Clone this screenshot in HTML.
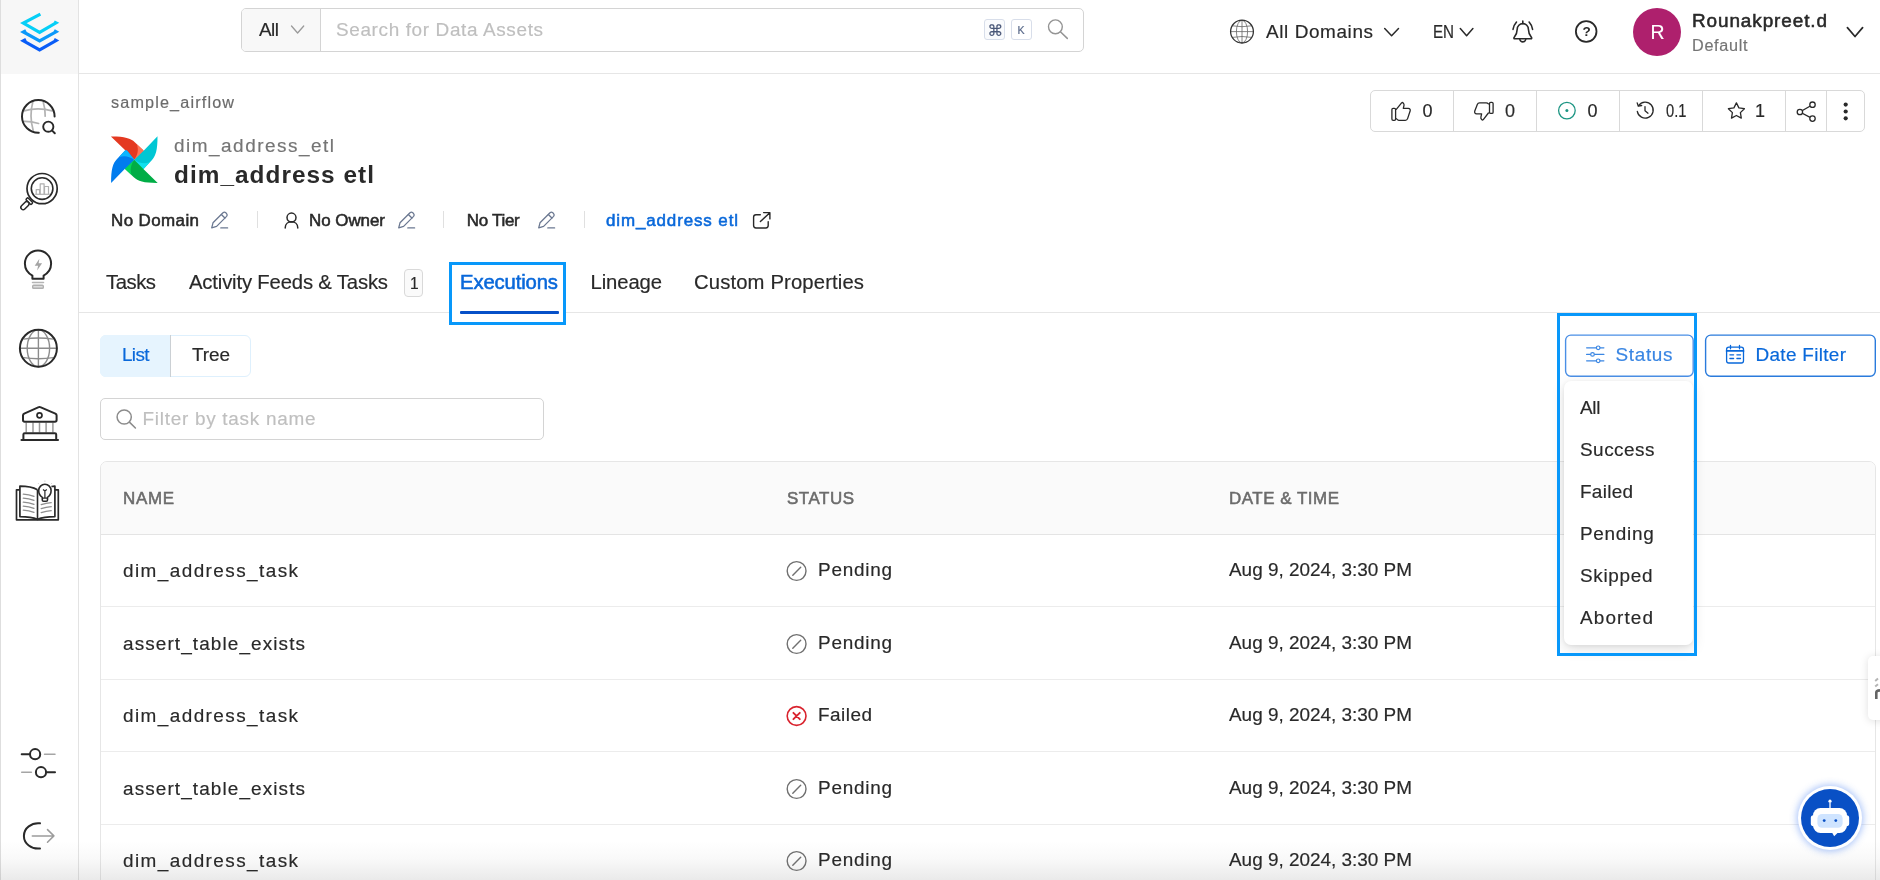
<!DOCTYPE html>
<html lang="en">
<head>
<meta charset="utf-8">
<title>dim_address etl - Executions</title>
<style>
*{box-sizing:border-box;margin:0;padding:0}
html,body{width:1880px;height:880px;overflow:hidden;background:#fff}
body{position:relative;font-family:"Liberation Sans",sans-serif;color:#292929}
.t{position:absolute;white-space:nowrap;line-height:1}
.b{position:absolute}
svg{position:absolute;overflow:visible}
.i{fill:none;stroke:#292929;stroke-width:1.5;stroke-linecap:round;stroke-linejoin:round}
</style>
</head>
<body>

<!-- sidebar -->
<div class="b" style="left:0;top:0;width:79px;height:880px;background:#fff;border-right:1px solid #e3e3e3;border-left:1px solid #dedede"></div>
<div class="b" style="left:1px;top:0;width:77px;height:74px;background:#f7f7f7"></div>
<!-- header line -->
<div class="b" style="left:79px;top:73px;width:1801px;height:1px;background:#e6e6e6"></div>
<!-- search -->
<div class="b" style="left:241px;top:8px;width:843px;height:44px;border:1px solid #d4d4d4;border-radius:5px;background:#fff"></div>
<div class="b" style="left:242px;top:9px;width:79px;height:42px;background:#f8f8f8;border-right:1px solid #d4d4d4;border-radius:4px 0 0 4px"></div>
<div class="b" style="left:984px;top:19px;width:21px;height:21px;border:1px solid #d8deea;border-radius:3px;background:#fafbfd"></div>
<div class="b" style="left:1011px;top:19px;width:21px;height:21px;border:1px solid #d8deea;border-radius:3px;background:#fff"></div>
<!-- avatar -->
<div class="b" style="left:1633px;top:8px;width:48px;height:48px;border-radius:50%;background:#ae206d"></div>
<!-- button group -->
<div class="b" style="left:1370px;top:90px;width:495px;height:42px;border:1px solid #d9d9d9;border-radius:5px;background:#fff"></div>
<div class="b" style="left:1453px;top:91px;width:1px;height:40px;background:#d9d9d9"></div>
<div class="b" style="left:1536px;top:91px;width:1px;height:40px;background:#d9d9d9"></div>
<div class="b" style="left:1619px;top:91px;width:1px;height:40px;background:#d9d9d9"></div>
<div class="b" style="left:1702px;top:91px;width:1px;height:40px;background:#d9d9d9"></div>
<div class="b" style="left:1785px;top:91px;width:1px;height:40px;background:#d9d9d9"></div>
<div class="b" style="left:1826px;top:91px;width:1px;height:40px;background:#d9d9d9"></div>
<!-- meta separators -->
<div class="b" style="left:257px;top:211px;width:1px;height:17px;background:#e0e0e0"></div>
<div class="b" style="left:443px;top:211px;width:1px;height:17px;background:#e0e0e0"></div>
<div class="b" style="left:584px;top:211px;width:1px;height:17px;background:#e0e0e0"></div>
<!-- tabs -->
<div class="b" style="left:79px;top:312px;width:1801px;height:1px;background:#e6e6e6"></div>
<div class="b" style="left:404px;top:269px;width:19px;height:28px;border:1px solid #d9d9d9;border-radius:4px;background:#fafafa"></div>
<div class="b" style="left:449px;top:262px;width:117px;height:63px;border:3px solid #0898fa;background:#fff"></div>
<div class="b" style="left:460px;top:311px;width:99px;height:3px;background:#0650c8;border-radius:1px"></div>
<!-- list/tree -->
<div class="b" style="left:100px;top:335px;width:151px;height:42px;border:1px solid #def0fd;border-radius:6px;background:#fff"></div>
<div class="b" style="left:100px;top:335px;width:71px;height:42px;background:#e6f4fe;border-radius:6px 0 0 6px;border-right:1px solid #cbd0d4"></div>
<!-- filter input -->
<div class="b" style="left:100px;top:398px;width:444px;height:42px;border:1px solid #d4d4d4;border-radius:5px;background:#fff"></div>
<!-- table -->
<div class="b" style="left:100px;top:461px;width:1776px;height:440px;border:1px solid #e6e6e6;border-radius:7px;background:#fff;overflow:hidden">
  <div style="height:72px;background:#fafafa"></div>
</div>
<div class="b" style="left:101px;top:533.5px;width:1774px;height:1.2px;background:#e4e4e4"></div>
<div class="b" style="left:101px;top:606px;width:1774px;height:1px;background:#ececec"></div>
<div class="b" style="left:101px;top:678.6px;width:1774px;height:1px;background:#ececec"></div>
<div class="b" style="left:101px;top:751px;width:1774px;height:1px;background:#ececec"></div>
<div class="b" style="left:101px;top:823.6px;width:1774px;height:1px;background:#ececec"></div>
<!-- status / date buttons -->
<svg style="left:1560px;top:330px" width="320" height="52" viewBox="1560 330 320 52">
<rect x="1565.6" y="335.1" width="127.6" height="41.1" rx="5.2" fill="#fff" stroke="#4a8fe6" stroke-width="1.4"/>
<rect x="1705.6" y="335.1" width="169.7" height="41.1" rx="5.2" fill="#fff" stroke="#2a7bdc" stroke-width="1.4"/>
</svg>

<!-- dropdown -->
<div class="b" style="left:1564px;top:381px;width:128.6px;height:264px;border-radius:7px;background:#fff;box-shadow:0 4px 14px rgba(0,0,0,0.13),0 1px 4px rgba(0,0,0,0.06)"></div>
<div class="b" style="left:1557px;top:313px;width:140px;height:343px;border:3px solid #0898fa"></div>
<!-- bottom gradient -->
<div class="b" style="left:0;top:841px;width:1880px;height:39px;background:linear-gradient(to bottom,rgba(120,120,120,0) 0%,rgba(120,120,120,0.045) 45%,rgba(120,120,120,0.155) 100%)"></div>
<!-- side tab -->
<div class="b" style="left:1868px;top:656px;width:20px;height:64px;border-radius:5px;background:#fff;box-shadow:0 1px 8px rgba(0,0,0,0.13)"></div>
<!-- chatbot -->
<div class="b" style="left:1798px;top:786px;width:64px;height:64px;border-radius:50%;background:#fff;box-shadow:0 0 7px 1.5px rgba(60,120,240,0.42)"></div>
<div class="b" style="left:1801px;top:789px;width:58px;height:58px;border-radius:50%;background:#0950c5"></div>
<svg style="left:0px;top:0px" width="80" height="75" viewBox="0 0 80 75">
<path d="M40.4 14.2 L23.4 23.1 L39.6 32.3 L56 22.9 L54 21.8" fill="none" stroke="#05cff7" stroke-width="3.2" stroke-linejoin="miter"/>
<path d="M26 30.6 L23.4 32 L39.6 41 L56 31.8 L54 30.7" fill="none" stroke="#0b98fa" stroke-width="3.2" stroke-linejoin="miter"/>
<path d="M26 39.4 L23.4 40.8 L39.6 49.8 L56 40.6 L54 39.5" fill="none" stroke="#0a5df7" stroke-width="3.2" stroke-linejoin="miter"/>
</svg>
<svg style="left:0px;top:90px" width="80" height="60" viewBox="0 90 80 60">
<g fill="none" stroke="#b2b2b2" stroke-width="1.7" stroke-linecap="round">
<path d="M32.8 102 Q29 116 33.2 130.5"/>
<path d="M43.3 102.6 Q45.4 109 45.2 116.2"/>
<path d="M24 110.9 Q38 106.8 52.2 110.9"/>
<path d="M24 121.4 Q31 121.2 38.6 123.5"/>
</g>
<path d="M38.8 132.7 A16.3 16.3 0 1 1 54.6 116.6" fill="none" stroke="#292929" stroke-width="2" stroke-linecap="round"/>
<circle cx="48.3" cy="126.7" r="5.1" fill="#fff" stroke="#292929" stroke-width="1.9"/>
<path d="M52.2 130.6 L54.8 133.2" stroke="#292929" stroke-width="2" stroke-linecap="round"/>
</svg>
<svg style="left:0px;top:165px" width="80" height="55" viewBox="0 165 80 55">
<circle cx="42.1" cy="188.6" r="15.1" fill="none" stroke="#292929" stroke-width="1.7"/>
<circle cx="42.1" cy="188.6" r="10.8" fill="none" stroke="#292929" stroke-width="1.6"/>
<g fill="none" stroke="#b0b0b0" stroke-width="1.2" stroke-linejoin="round">
<path d="M35.3 194.3 H49.8"/>
<path d="M36.2 194.3 V189.6 H39.6 V194.3"/>
<path d="M40.2 194.3 V183.8 H44.1 V194.3"/>
<path d="M44.5 194.3 V186.5 H48.5 V194.3"/>
</g>
<g transform="translate(29.4 201.1) rotate(45)" fill="#fff" stroke="#292929" stroke-width="1.5" stroke-linejoin="round">
<rect x="-3.7" y="-1.3" width="7.4" height="2.8" rx="1"/>
<rect x="-2.3" y="1.5" width="4.6" height="9.6" rx="2.3"/>
</g>
</svg>
<svg style="left:0px;top:240px" width="80" height="55" viewBox="0 240 80 55">
<path d="M32.4 278.7 V275.6 C27.8 273.2 24.9 268.8 24.9 263.6 A13.1 13.1 0 0 1 51.1 263.6 C51.1 268.8 48.2 273.2 43.6 275.6 V278.7 Z" fill="none" stroke="#292929" stroke-width="2" stroke-linejoin="round"/>
<path d="M32.5 282.5 H43.5" stroke="#b5b5b5" stroke-width="1.5" stroke-linecap="round"/>
<rect x="32.7" y="285.3" width="10.6" height="3" rx="0.9" fill="#dcdcdc" stroke="#b0b0b0" stroke-width="1.4"/>
<path d="M39.4 258.8 L34.7 265.7 H38.1 L37.1 270.4 L42.1 263.2 H38.6 Z" fill="#a4a4a4"/>
</svg>
<svg style="left:0px;top:325px" width="80" height="50" viewBox="0 325 80 50">
<g fill="none" stroke="#8c8c8c" stroke-width="1.4">
<path d="M38.4 330 V366.6"/>
<path d="M20 348.3 H56.8"/>
<ellipse cx="38.4" cy="348.3" rx="11.2" ry="18.4"/>
<path d="M23.4 339.1 Q38.4 336.9 53.4 339.1"/>
<path d="M23.4 357.6 Q38.4 359.8 53.4 357.6"/>
</g>
<circle cx="38.4" cy="348.3" r="18.5" fill="none" stroke="#292929" stroke-width="2"/>
</svg>
<svg style="left:0px;top:400px" width="80" height="45" viewBox="0 400 80 45">
<g stroke="#9c9c9c" stroke-width="1.5">
<path d="M26.2 422.5 V432.6 M33 422.5 V432.6 M39.5 422.5 V432.6 M46.1 422.5 V432.6 M52.9 422.5 V432.6"/>
</g>
<path d="M38.7 407.2 Q39.5 406.8 40.3 407.2 L55.4 413.6 Q56.6 414.2 56.6 415.4 V420 Q56.6 421.7 54.9 421.7 H24.7 Q23 421.7 23 420 V415.4 Q23 414.2 24.2 413.6 Z" fill="none" stroke="#292929" stroke-width="2" stroke-linejoin="round"/>
<circle cx="39.5" cy="415.3" r="2.5" fill="none" stroke="#292929" stroke-width="1.7"/>
<path d="M23.4 439.4 V434.6 Q23.4 433.3 24.7 433.3 H54.9 Q56.2 433.3 56.2 434.6 V439.4" fill="none" stroke="#292929" stroke-width="2" stroke-linejoin="round"/>
<path d="M21.5 440 H58" stroke="#292929" stroke-width="2.1" stroke-linecap="round"/>
</svg>
<svg style="left:0px;top:475px" width="80" height="50" viewBox="0 475 80 50">
<path d="M19.9 489.8 H16.5 V519.8 H58.3 V489.8 H54.9" fill="none" stroke="#292929" stroke-width="1.7" stroke-linejoin="round"/>
<path d="M37.5 489.8 C33 487.3 26.5 486.2 19.9 486.2 V516.6 C26.5 516.6 33 517.4 37.5 519.4 C42 517.4 48.5 516.6 54.9 516.6 V486.2 C53.4 486.2 52.4 486.3 51.4 486.5" fill="none" stroke="#292929" stroke-width="1.7" stroke-linejoin="round"/>
<path d="M37.5 489.8 V519.4" stroke="#292929" stroke-width="1.6"/>
<g stroke="#8f8f8f" stroke-width="1.3" fill="none" stroke-linecap="round">
<path d="M23.3 494.2 Q29 494.6 34 496.4 M23.3 498.2 Q29 498.6 34 500.4 M23.3 502.2 Q29 502.6 34 504.4 M23.3 506.2 Q29 506.6 34 508.4 M23.3 510.2 Q29 510.6 34 512.4"/>
<path d="M41.2 504.6 Q46 502.9 51.2 502.6 M41.2 508.6 Q46 506.9 51.2 506.6 M41.2 512.6 Q46 510.9 51.2 510.6"/>
</g>
<path d="M42.3 500 V497.3 C40 495.8 38.7 493.3 38.7 490.5 A6.2 6.2 0 0 1 51.1 490.5 C51.1 493.3 49.8 495.8 47.5 497.3 V500 Q47.5 501.3 46.2 501.3 H43.6 Q42.3 501.3 42.3 500 Z" fill="#fff" stroke="#292929" stroke-width="1.6" stroke-linejoin="round"/>
<path d="M43 489.6 L44.9 490.9 L46.8 489.6 M44.9 490.9 V497.4 M42.5 498.2 H47.3" stroke="#292929" stroke-width="1.2" fill="none"/>
<g stroke="#b8b8b8" stroke-width="0.9"><path d="M44.9 480.6 V481.6 M38.3 483.4 L39 484.1 M51.6 483.4 L50.9 484.1"/></g>
</svg>
<svg style="left:0px;top:740px" width="80" height="45" viewBox="0 740 80 45">
<path d="M21.7 754.2 H29.6" stroke="#292929" stroke-width="2" stroke-linecap="round"/>
<circle cx="35.1" cy="754.2" r="5.1" fill="none" stroke="#292929" stroke-width="2"/>
<path d="M44.5 754.2 H55" stroke="#a5a5a5" stroke-width="1.5" stroke-linecap="round"/>
<path d="M21.7 772.2 H31.4" stroke="#a5a5a5" stroke-width="1.5" stroke-linecap="round"/>
<circle cx="41" cy="772.2" r="5.1" fill="none" stroke="#292929" stroke-width="2"/>
<path d="M46.8 772.2 H55" stroke="#292929" stroke-width="2" stroke-linecap="round"/>
</svg>
<svg style="left:0px;top:815px" width="80" height="45" viewBox="0 815 80 45">
<path d="M40 823.3 A14.3 12.7 0 1 0 40 848.5" fill="none" stroke="#292929" stroke-width="2" stroke-linecap="round"/>
<path d="M32.3 835.9 H53.6 M47.5 829.6 L53.9 835.9 L47.5 842.3" fill="none" stroke="#9c9c9c" stroke-width="1.5" stroke-linecap="round" stroke-linejoin="round"/>
</svg>
<svg style="left:285px;top:20px" width="25" height="20" viewBox="285 20 25 20"><path d="M291.5 26 L297.6 33 L303.7 26" fill="none" stroke="#9a9a9a" stroke-width="1.3" stroke-linecap="round" stroke-linejoin="round"/></svg>
<svg style="left:1040px;top:15px" width="35" height="30" viewBox="1040 15 35 30"><circle cx="1055.4" cy="26.8" r="6.9" fill="none" stroke="#949494" stroke-width="1.4"/><path d="M1060.4 31.8 L1067.3 38.4" stroke="#949494" stroke-width="1.5" stroke-linecap="round"/></svg>
<svg style="left:1225px;top:15px" width="35" height="35" viewBox="1225 15 35 35">
<g fill="none" stroke="#666" stroke-width="0.8">
<path d="M1242 20.2 V43 M1230.5 31.6 H1253.5"/>
<ellipse cx="1242" cy="31.6" rx="5.6" ry="11.3"/>
<path d="M1232.3 25.8 Q1242 27.6 1251.7 25.8 M1232.3 37.4 Q1242 35.6 1251.7 37.4"/>
</g>
<circle cx="1242" cy="31.6" r="11.4" fill="none" stroke="#333" stroke-width="1.3"/>
</svg>
<svg style="left:1380px;top:22px" width="25" height="20" viewBox="1380 22 25 20"><path d="M1384.7 28.6 L1391.6 35.8 L1398.5 28.6" fill="none" stroke="#292929" stroke-width="1.5" stroke-linecap="round" stroke-linejoin="round"/></svg>
<svg style="left:1456px;top:22px" width="25" height="20" viewBox="1456 22 25 20"><path d="M1460.3 28.6 L1466.6 35.8 L1472.9 28.6" fill="none" stroke="#292929" stroke-width="1.5" stroke-linecap="round" stroke-linejoin="round"/></svg>
<svg style="left:1842px;top:20px" width="30" height="25" viewBox="1842 20 30 25"><path d="M1847.4 27.6 L1855 36.5 L1862.6 27.6" fill="none" stroke="#292929" stroke-width="1.7" stroke-linecap="round" stroke-linejoin="round"/></svg>
<svg style="left:1505px;top:15px" width="35" height="35" viewBox="1505 15 35 35">
<g fill="none" stroke="#292929" stroke-width="1.6" stroke-linecap="round" stroke-linejoin="round">
<path d="M1522.8 21 V23.6"/>
<path d="M1514.6 38.8 C1514 38.8 1513.7 38.1 1514.1 37.6 C1516.3 34.8 1517.2 32.6 1517.2 29.2 C1517.2 26 1519.7 23.6 1522.8 23.6 C1525.9 23.6 1528.4 26 1528.4 29.2 C1528.4 32.6 1529.3 34.8 1531.5 37.6 C1531.9 38.1 1531.6 38.8 1531 38.8 Z"/>
<path d="M1519.9 39.6 A3 3 0 0 0 1525.7 39.6"/>
<path d="M1516.5 22 Q1513.6 25.2 1513 29.4"/>
<path d="M1529.1 22 Q1532 25.2 1532.6 29.4"/>
</g>
</svg>
<svg style="left:1570px;top:15px" width="35" height="35" viewBox="1570 15 35 35"><circle cx="1586.2" cy="31.5" r="10.3" fill="none" stroke="#292929" stroke-width="1.8"/></svg>
<svg style="left:110px;top:135px" width="50" height="50" viewBox="110 135 50 50"><g transform="translate(134.3 159.7)"><g transform="rotate(0)"><path d="M-23.4 -23.2 C-10 -23.3 -3.5 -21.5 0.5 -17.5 L9 -9.5 Q10 -8.2 9 -7 L0 0 L-9.3 -9.6 Z" fill="#e43921"/><path d="M2.6 -15.2 L9 -9.5 Q10 -8.2 9 -7 L0 0 C3.5 -5 4.5 -10 2.6 -15.2 Z" fill="#ff7557"/></g><g transform="rotate(90)"><path d="M-23.4 -23.2 C-10 -23.3 -3.5 -21.5 0.5 -17.5 L9 -9.5 Q10 -8.2 9 -7 L0 0 L-9.3 -9.6 Z" fill="#00c7d4"/><path d="M2.6 -15.2 L9 -9.5 Q10 -8.2 9 -7 L0 0 C3.5 -5 4.5 -10 2.6 -15.2 Z" fill="#11e1ee"/></g><g transform="rotate(180)"><path d="M-23.4 -23.2 C-10 -23.3 -3.5 -21.5 0.5 -17.5 L9 -9.5 Q10 -8.2 9 -7 L0 0 L-9.3 -9.6 Z" fill="#00ad46"/><path d="M2.6 -15.2 L9 -9.5 Q10 -8.2 9 -7 L0 0 C3.5 -5 4.5 -10 2.6 -15.2 Z" fill="#04d659"/></g><g transform="rotate(270)"><path d="M-23.4 -23.2 C-10 -23.3 -3.5 -21.5 0.5 -17.5 L9 -9.5 Q10 -8.2 9 -7 L0 0 L-9.3 -9.6 Z" fill="#017cee"/><path d="M2.6 -15.2 L9 -9.5 Q10 -8.2 9 -7 L0 0 C3.5 -5 4.5 -10 2.6 -15.2 Z" fill="#0cb6ff"/></g></g></svg>
<svg style="left:210.1px;top:210px" width="20" height="20" viewBox="210.1 210 20 20"><g transform="translate(211.1 211.6)" fill="none" stroke="#6b7891" stroke-width="1.3" stroke-linecap="round" stroke-linejoin="round">
<path d="M0.7 16.2 L2 11.2 L12 1.2 Q13.4 0 14.8 1.2 L15.6 2 Q16.8 3.4 15.6 4.8 L5.6 14.8 Z"/>
<path d="M10.4 2.9 L13.9 6.4"/>
<path d="M9.8 16.3 H16.6"/>
</g></svg>
<svg style="left:396.5px;top:210px" width="20" height="20" viewBox="396.5 210 20 20"><g transform="translate(397.5 211.6)" fill="none" stroke="#6b7891" stroke-width="1.3" stroke-linecap="round" stroke-linejoin="round">
<path d="M0.7 16.2 L2 11.2 L12 1.2 Q13.4 0 14.8 1.2 L15.6 2 Q16.8 3.4 15.6 4.8 L5.6 14.8 Z"/>
<path d="M10.4 2.9 L13.9 6.4"/>
<path d="M9.8 16.3 H16.6"/>
</g></svg>
<svg style="left:536.6px;top:210px" width="20" height="20" viewBox="536.6 210 20 20"><g transform="translate(537.6 211.6)" fill="none" stroke="#6b7891" stroke-width="1.3" stroke-linecap="round" stroke-linejoin="round">
<path d="M0.7 16.2 L2 11.2 L12 1.2 Q13.4 0 14.8 1.2 L15.6 2 Q16.8 3.4 15.6 4.8 L5.6 14.8 Z"/>
<path d="M10.4 2.9 L13.9 6.4"/>
<path d="M9.8 16.3 H16.6"/>
</g></svg>
<svg style="left:280px;top:210px" width="22" height="20" viewBox="280 210 22 20"><g fill="none" stroke="#292929" stroke-width="1.5" stroke-linecap="round">
<circle cx="291.5" cy="217.6" r="4.5"/>
<path d="M285.2 228 C285.2 219.8 297.8 219.8 297.8 228"/>
</g></svg>
<svg style="left:750px;top:208px" width="24" height="24" viewBox="750 208 24 24"><g fill="none" stroke="#292929" stroke-width="1.4" stroke-linecap="round" stroke-linejoin="round">
<path d="M760.3 214.7 H756 Q753.6 214.7 753.6 217.1 V225.6 Q753.6 228 756 228 H765.8 Q768.2 228 768.2 225.6 V221.6"/>
<path d="M760.4 221.6 L769.6 212.9 M763.6 212.6 H769.9 V218.9"/>
</g></svg>
<svg style="left:1385px;top:98px" width="30" height="28" viewBox="1385 98 30 28"><g fill="none" stroke="#292929" stroke-width="1.3" stroke-linecap="round" stroke-linejoin="round">
<rect x="1391.9" y="108.3" width="3.7" height="12" rx="1.2"/>
<path d="M1396.5 109.2 L1401.6 102.9 Q1402.4 102.2 1403.2 102.9 Q1404.3 103.9 1404 105.3 L1403.3 108.3 H1408.3 Q1410.6 108.5 1410.2 110.8 L1407.6 118.6 Q1407 120.3 1405.3 120.3 H1398.8 Q1397.3 120.2 1396.5 118.8"/>
</g></svg>
<svg style="left:1468px;top:98px" width="30" height="28" viewBox="1468 98 30 28"><g fill="none" stroke="#292929" stroke-width="1.3" stroke-linecap="round" stroke-linejoin="round">
<rect x="1489.5" y="102.4" width="3.6" height="11" rx="1.2"/>
<path d="M1488.4 113 L1483.3 119.6 Q1482.5 120.4 1481.7 119.6 Q1480.6 118.6 1480.9 117.2 L1481.6 113.8 H1476.6 Q1474.3 113.6 1474.7 111.3 L1477.3 104.4 Q1477.9 102.8 1479.6 102.8 H1486.1 Q1487.6 102.8 1488.4 103.9"/>
</g></svg>
<svg style="left:1555px;top:98px" width="25" height="25" viewBox="1555 98 25 25"><circle cx="1566.9" cy="110.6" r="8.3" fill="none" stroke="#1c9583" stroke-width="1.3"/><circle cx="1566.9" cy="110.6" r="1.5" fill="#1c9583"/></svg>
<svg style="left:1633px;top:98px" width="25" height="25" viewBox="1633 98 25 25"><g fill="none" stroke="#292929" stroke-width="1.3" stroke-linecap="round" stroke-linejoin="round">
<path d="M1638.6 105.6 A8 8 0 1 1 1637.3 111.4"/>
<path d="M1637.2 102.9 L1638.3 106.2 L1641.7 105.5"/>
<path d="M1645 106.6 V110.7 L1648 113.2"/>
</g></svg>
<svg style="left:1724px;top:98px" width="25" height="25" viewBox="1724 98 25 25"><path d="M1736.4 102.9 L1738.9 107.9 L1744.4 108.7 L1740.4 112.6 L1741.3 118.1 L1736.4 115.5 L1731.5 118.1 L1732.4 112.6 L1728.4 108.7 L1733.9 107.9 Z" fill="none" stroke="#292929" stroke-width="1.3" stroke-linejoin="round"/></svg>
<svg style="left:1793px;top:98px" width="26" height="28" viewBox="1793 98 26 28"><g fill="#fff" stroke="#292929" stroke-width="1.3">
<path d="M1812.5 104.7 L1799.9 112 L1812.5 118.6" fill="none"/>
<circle cx="1812.5" cy="104.7" r="2.7"/><circle cx="1799.9" cy="112" r="2.7"/><circle cx="1812.5" cy="118.6" r="2.7"/>
</g></svg>
<svg style="left:1840px;top:98px" width="12" height="28" viewBox="1840 98 12 28"><circle cx="1845.7" cy="104.6" r="2.1" fill="#292929"/><circle cx="1845.7" cy="111.5" r="2.1" fill="#292929"/><circle cx="1845.7" cy="118.3" r="2.1" fill="#292929"/></svg>
<svg style="left:112px;top:405px" width="30" height="28" viewBox="112 405 30 28"><circle cx="124.2" cy="417" r="7.1" fill="none" stroke="#8c8c8c" stroke-width="1.5"/><path d="M129.4 422.2 L135.4 428" stroke="#8c8c8c" stroke-width="1.6" stroke-linecap="round"/></svg>
<svg style="left:1583px;top:342px" width="25" height="25" viewBox="1583 342 25 25"><g fill="#fff" stroke="#3a86e3" stroke-width="1.2" stroke-linecap="round">
<path d="M1586.6 347.8 H1603.9 M1586.6 354.4 H1603.9 M1586.6 360.8 H1603.9"/>
<circle cx="1598.2" cy="347.8" r="1.8"/><circle cx="1592.5" cy="354.4" r="1.8"/><circle cx="1598.2" cy="360.8" r="1.8"/>
</g></svg>
<svg style="left:1722px;top:342px" width="26" height="26" viewBox="1722 342 26 26"><g fill="none" stroke="#0968da" stroke-width="1.3" stroke-linecap="round" stroke-linejoin="round">
<rect x="1726.6" y="347.1" width="16.9" height="15.9" rx="2.2"/>
<path d="M1726.6 350.9 H1743.5" stroke-width="1.7"/><path d="M1730.5 345.4 V348.8 M1739.5 345.4 V348.8"/>
<path d="M1729.9 354.8 H1733.6 M1736.9 354.8 H1740.5 M1729.9 358.5 H1733.6 M1736.9 358.5 H1740.5"/>
</g></svg>
<svg style="left:784px;top:558px" width="26" height="26" viewBox="784 558 26 26"><circle cx="796.6" cy="571" r="9.4" fill="none" stroke="#707070" stroke-width="1.4"/><path d="M792.8 575.3 L800.7 567.2" stroke="#707070" stroke-width="1.4" stroke-linecap="round"/></svg>
<svg style="left:784px;top:630.5px" width="26" height="26" viewBox="784 630.5 26 26"><circle cx="796.6" cy="643.5" r="9.4" fill="none" stroke="#707070" stroke-width="1.4"/><path d="M792.8 647.8 L800.7 639.7" stroke="#707070" stroke-width="1.4" stroke-linecap="round"/></svg>
<svg style="left:784px;top:703px" width="26" height="26" viewBox="784 703 26 26"><circle cx="796.6" cy="716" r="9.4" fill="none" stroke="#d9232e" stroke-width="1.6"/><path d="M793.4 712.8 L799.8 719.2 M799.8 712.8 L793.4 719.2" stroke="#d9232e" stroke-width="1.9" stroke-linecap="round"/></svg>
<svg style="left:784px;top:775.5px" width="26" height="26" viewBox="784 775.5 26 26"><circle cx="796.6" cy="788.5" r="9.4" fill="none" stroke="#707070" stroke-width="1.4"/><path d="M792.8 792.8 L800.7 784.7" stroke="#707070" stroke-width="1.4" stroke-linecap="round"/></svg>
<svg style="left:784px;top:848px" width="26" height="26" viewBox="784 848 26 26"><circle cx="796.6" cy="861" r="9.4" fill="none" stroke="#707070" stroke-width="1.4"/><path d="M792.8 865.3 L800.7 857.2" stroke="#707070" stroke-width="1.4" stroke-linecap="round"/></svg>
<svg style="left:1800px;top:790px" width="60" height="60" viewBox="1800 790 60 60">
<path d="M1830 808 V802.5" stroke="#fff" stroke-width="1.3"/>
<circle cx="1830" cy="801.2" r="1.6" fill="#fff"/>
<rect x="1810.8" y="815.2" width="38.4" height="11" rx="2.6" fill="#fff"/>
<rect x="1813" y="808" width="34" height="25" rx="7.5" fill="#fff"/>
<path d="M1832 832.5 H1838 L1834.2 836.3 Z" fill="#fff"/>
<rect x="1817.4" y="814" width="25.2" height="13.8" rx="4.6" fill="#cfe4ff"/>
<circle cx="1824.2" cy="820.6" r="1.4" fill="#0950c5"/>
<circle cx="1835.8" cy="820.6" r="1.4" fill="#0950c5"/>
</svg>
<svg style="left:1870px;top:675px" width="10" height="30" viewBox="1870 675 10 30"><path d="M1875.2 681 L1878 678.6 M1875.2 686.6 L1878 684.2" stroke="#b4b4b4" stroke-width="2"/><path d="M1876.3 699 V692.5 Q1876.3 690.6 1880 690.4" fill="none" stroke="#646464" stroke-width="2.6"/></svg>
<div class="b" style="left:0;top:0;width:1880px;height:880px;will-change:transform">
<span class="t" id="t0" style="left:259.00px;top:21.01px;font-size:18.93px;font-weight:normal;color:#292929;letter-spacing:-0.516px;-webkit-text-stroke:0.18px #292929;">All</span>
<span class="t" id="t1" style="left:336.00px;top:21.01px;font-size:18.93px;font-weight:normal;color:#bfbfbf;letter-spacing:0.642px;-webkit-text-stroke:0.18px #bfbfbf;">Search for Data Assets</span>
<span class="t" id="t2" style="left:1266.00px;top:22.51px;font-size:18.93px;font-weight:normal;color:#292929;letter-spacing:0.605px;-webkit-text-stroke:0.18px #292929;">All Domains</span>
<span class="t" id="t3" style="left:1432.50px;top:23.51px;font-size:17.65px;font-weight:normal;color:#292929;letter-spacing:0.000px;-webkit-text-stroke:0.18px #292929;transform:scaleX(0.86);transform-origin:0 0;">EN</span>
<span class="t" id="t4" style="left:1650.50px;top:23.00px;font-size:19.40px;font-weight:normal;color:#fff;letter-spacing:0.000px;-webkit-text-stroke:0.18px #fff;">R</span>
<span class="t" id="t5" style="left:1692.00px;top:12.01px;font-size:18.93px;font-weight:normal;color:#292929;letter-spacing:0.905px;-webkit-text-stroke:0.55px #292929;">Rounakpreet.d</span>
<span class="t" id="t6" style="left:1692.00px;top:37.00px;font-size:16.22px;font-weight:normal;color:#757575;letter-spacing:0.693px;-webkit-text-stroke:0.18px #757575;">Default</span>
<span class="t" id="t7" style="left:111.00px;top:94.00px;font-size:16.22px;font-weight:normal;color:#6b6b6b;letter-spacing:1.148px;-webkit-text-stroke:0.18px #6b6b6b;">sample_airflow</span>
<span class="t" id="t8" style="left:174.00px;top:137.01px;font-size:18.93px;font-weight:normal;color:#757575;letter-spacing:1.511px;-webkit-text-stroke:0.18px #757575;">dim_address_etl</span>
<span class="t" id="t9" style="left:174.00px;top:162.51px;font-size:24.34px;font-weight:bold;color:#292929;letter-spacing:1.054px;">dim_address etl</span>
<span class="t" id="t10" style="left:111.00px;top:213.01px;font-size:16.95px;font-weight:normal;color:#292929;letter-spacing:0.408px;-webkit-text-stroke:0.55px #292929;">No Domain</span>
<span class="t" id="t11" style="left:309.00px;top:213.01px;font-size:16.95px;font-weight:normal;color:#292929;letter-spacing:-0.036px;-webkit-text-stroke:0.55px #292929;">No Owner</span>
<span class="t" id="t12" style="left:466.75px;top:213.01px;font-size:16.95px;font-weight:normal;color:#292929;letter-spacing:-0.266px;-webkit-text-stroke:0.55px #292929;">No Tier</span>
<span class="t" id="t13" style="left:606.00px;top:213.01px;font-size:16.95px;font-weight:normal;color:#0968da;letter-spacing:0.887px;-webkit-text-stroke:0.55px #0968da;">dim_address etl</span>
<span class="t" id="t14" style="left:106.00px;top:272.00px;font-size:20.28px;font-weight:normal;color:#292929;letter-spacing:-0.453px;-webkit-text-stroke:0.18px #292929;">Tasks</span>
<span class="t" id="t15" style="left:189.00px;top:272.00px;font-size:20.28px;font-weight:normal;color:#292929;letter-spacing:-0.160px;-webkit-text-stroke:0.18px #292929;">Activity Feeds &amp; Tasks</span>
<span class="t" id="t16" style="left:410.00px;top:275.51px;font-size:15.60px;font-weight:normal;color:#292929;letter-spacing:0.000px;-webkit-text-stroke:0.18px #292929;">1</span>
<span class="t" id="t17" style="left:460.00px;top:272.00px;font-size:20.28px;font-weight:normal;color:#0968da;letter-spacing:-0.127px;-webkit-text-stroke:0.55px #0968da;">Executions</span>
<span class="t" id="t18" style="left:590.50px;top:272.00px;font-size:20.28px;font-weight:normal;color:#292929;letter-spacing:-0.107px;-webkit-text-stroke:0.18px #292929;">Lineage</span>
<span class="t" id="t19" style="left:694.00px;top:272.00px;font-size:20.28px;font-weight:normal;color:#292929;letter-spacing:0.136px;-webkit-text-stroke:0.18px #292929;">Custom Properties</span>
<span class="t" id="t20" style="left:122.00px;top:346.01px;font-size:18.93px;font-weight:normal;color:#0968da;letter-spacing:-0.651px;-webkit-text-stroke:0.18px #0968da;">List</span>
<span class="t" id="t21" style="left:192.00px;top:346.01px;font-size:18.93px;font-weight:normal;color:#292929;letter-spacing:-0.073px;-webkit-text-stroke:0.18px #292929;">Tree</span>
<span class="t" id="t22" style="left:1615.50px;top:346.01px;font-size:18.93px;font-weight:normal;color:#3a86e3;letter-spacing:0.669px;-webkit-text-stroke:0.18px #3a86e3;">Status</span>
<span class="t" id="t23" style="left:1755.50px;top:346.01px;font-size:18.93px;font-weight:normal;color:#0968da;letter-spacing:0.322px;-webkit-text-stroke:0.18px #0968da;">Date Filter</span>
<span class="t" id="t24" style="left:142.50px;top:410.01px;font-size:18.93px;font-weight:normal;color:#bfbfbf;letter-spacing:0.731px;-webkit-text-stroke:0.18px #bfbfbf;">Filter by task name</span>
<span class="t" id="t25" style="left:123.00px;top:491.01px;font-size:16.97px;font-weight:normal;color:#6b6b6b;letter-spacing:0.688px;-webkit-text-stroke:0.55px #6b6b6b;">NAME</span>
<span class="t" id="t26" style="left:787.00px;top:491.01px;font-size:16.97px;font-weight:normal;color:#6b6b6b;letter-spacing:0.537px;-webkit-text-stroke:0.55px #6b6b6b;">STATUS</span>
<span class="t" id="t27" style="left:1229.00px;top:491.01px;font-size:16.97px;font-weight:normal;color:#6b6b6b;letter-spacing:0.522px;-webkit-text-stroke:0.55px #6b6b6b;">DATE &amp; TIME</span>
<span class="t" id="t28" style="left:1580.00px;top:399.01px;font-size:18.93px;font-weight:normal;color:#292929;letter-spacing:-0.266px;-webkit-text-stroke:0.18px #292929;">All</span>
<span class="t" id="t29" style="left:1580.00px;top:441.01px;font-size:18.93px;font-weight:normal;color:#292929;letter-spacing:0.497px;-webkit-text-stroke:0.18px #292929;">Success</span>
<span class="t" id="t30" style="left:1580.00px;top:483.01px;font-size:18.93px;font-weight:normal;color:#292929;letter-spacing:0.291px;-webkit-text-stroke:0.18px #292929;">Failed</span>
<span class="t" id="t31" style="left:1580.00px;top:525.01px;font-size:18.93px;font-weight:normal;color:#292929;letter-spacing:0.716px;-webkit-text-stroke:0.18px #292929;">Pending</span>
<span class="t" id="t32" style="left:1580.00px;top:567.01px;font-size:18.93px;font-weight:normal;color:#292929;letter-spacing:0.685px;-webkit-text-stroke:0.18px #292929;">Skipped</span>
<span class="t" id="t33" style="left:1580.00px;top:609.01px;font-size:18.93px;font-weight:normal;color:#292929;letter-spacing:1.120px;-webkit-text-stroke:0.18px #292929;">Aborted</span>
<span class="t" id="t34" style="left:1422.50px;top:101.76px;font-size:18.00px;font-weight:normal;color:#292929;letter-spacing:0.000px;-webkit-text-stroke:0.18px #292929;">0</span>
<span class="t" id="t35" style="left:1505.00px;top:101.76px;font-size:18.00px;font-weight:normal;color:#292929;letter-spacing:0.000px;-webkit-text-stroke:0.18px #292929;">0</span>
<span class="t" id="t36" style="left:1587.50px;top:101.76px;font-size:18.00px;font-weight:normal;color:#292929;letter-spacing:0.000px;-webkit-text-stroke:0.18px #292929;">0</span>
<span class="t" id="t37" style="left:1666.00px;top:102.75px;font-size:17.50px;font-weight:normal;color:#292929;letter-spacing:0.000px;-webkit-text-stroke:0.18px #292929;transform:scaleX(0.84);transform-origin:0 0;">0.1</span>
<span class="t" id="t38" style="left:1755.00px;top:101.76px;font-size:18.00px;font-weight:normal;color:#292929;letter-spacing:0.000px;-webkit-text-stroke:0.18px #292929;">1</span>
<span class="t" id="t39" style="left:1582.60px;top:25.31px;font-size:13.50px;font-weight:bold;color:#292929;letter-spacing:0.000px;">?</span>
<span class="t" id="t40" style="left:1017.50px;top:25.00px;font-size:10.67px;font-weight:normal;color:#5a6a8a;letter-spacing:0.000px;-webkit-text-stroke:0.18px #5a6a8a;">K</span>
<span class="t" id="t41" style="left:987.60px;top:23.61px;font-size:15.50px;font-weight:normal;color:#4a5878;letter-spacing:0.000px;-webkit-text-stroke:0.18px #4a5878;font-family:'DejaVu Sans',sans-serif;">&#8984;</span>
<span class="t" id="t42" style="left:123.00px;top:562.01px;font-size:18.93px;font-weight:normal;color:#292929;letter-spacing:1.429px;-webkit-text-stroke:0.18px #292929;">dim_address_task</span>
<span class="t" id="t43" style="left:818.00px;top:561.10px;font-size:18.93px;font-weight:normal;color:#292929;letter-spacing:0.758px;-webkit-text-stroke:0.18px #292929;">Pending</span>
<span class="t" id="t44" style="left:1229.00px;top:561.10px;font-size:18.93px;font-weight:normal;color:#292929;letter-spacing:-0.002px;-webkit-text-stroke:0.18px #292929;">Aug 9, 2024, 3:30 PM</span>
<span class="t" id="t45" style="left:123.00px;top:634.51px;font-size:18.93px;font-weight:normal;color:#292929;letter-spacing:1.112px;-webkit-text-stroke:0.18px #292929;">assert_table_exists</span>
<span class="t" id="t46" style="left:818.00px;top:633.60px;font-size:18.93px;font-weight:normal;color:#292929;letter-spacing:0.758px;-webkit-text-stroke:0.18px #292929;">Pending</span>
<span class="t" id="t47" style="left:1229.00px;top:633.60px;font-size:18.93px;font-weight:normal;color:#292929;letter-spacing:-0.002px;-webkit-text-stroke:0.18px #292929;">Aug 9, 2024, 3:30 PM</span>
<span class="t" id="t48" style="left:123.00px;top:707.01px;font-size:18.93px;font-weight:normal;color:#292929;letter-spacing:1.429px;-webkit-text-stroke:0.18px #292929;">dim_address_task</span>
<span class="t" id="t49" style="left:818.00px;top:706.10px;font-size:18.93px;font-weight:normal;color:#292929;letter-spacing:0.491px;-webkit-text-stroke:0.18px #292929;">Failed</span>
<span class="t" id="t50" style="left:1229.00px;top:706.10px;font-size:18.93px;font-weight:normal;color:#292929;letter-spacing:-0.002px;-webkit-text-stroke:0.18px #292929;">Aug 9, 2024, 3:30 PM</span>
<span class="t" id="t51" style="left:123.00px;top:779.51px;font-size:18.93px;font-weight:normal;color:#292929;letter-spacing:1.112px;-webkit-text-stroke:0.18px #292929;">assert_table_exists</span>
<span class="t" id="t52" style="left:818.00px;top:778.60px;font-size:18.93px;font-weight:normal;color:#292929;letter-spacing:0.758px;-webkit-text-stroke:0.18px #292929;">Pending</span>
<span class="t" id="t53" style="left:1229.00px;top:778.60px;font-size:18.93px;font-weight:normal;color:#292929;letter-spacing:-0.002px;-webkit-text-stroke:0.18px #292929;">Aug 9, 2024, 3:30 PM</span>
<span class="t" id="t54" style="left:123.00px;top:852.01px;font-size:18.93px;font-weight:normal;color:#292929;letter-spacing:1.429px;-webkit-text-stroke:0.18px #292929;">dim_address_task</span>
<span class="t" id="t55" style="left:818.00px;top:851.10px;font-size:18.93px;font-weight:normal;color:#292929;letter-spacing:0.758px;-webkit-text-stroke:0.18px #292929;">Pending</span>
<span class="t" id="t56" style="left:1229.00px;top:851.10px;font-size:18.93px;font-weight:normal;color:#292929;letter-spacing:-0.002px;-webkit-text-stroke:0.18px #292929;">Aug 9, 2024, 3:30 PM</span>
</div>
</body>
</html>
